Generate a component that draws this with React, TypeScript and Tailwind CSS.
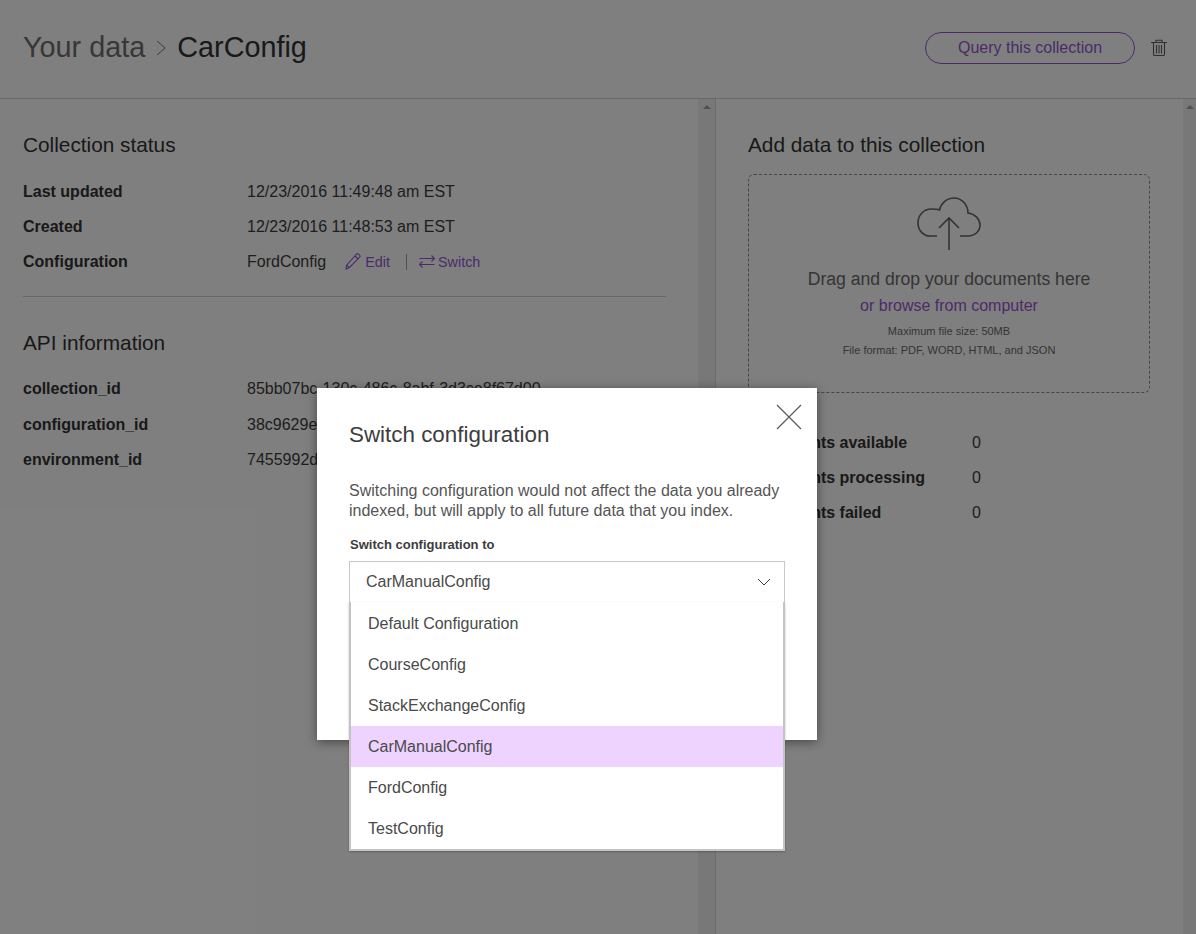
const options = [
  "Default Configuration",
  "CourseConfig",
  "StackExchangeConfig",
  "CarManualConfig",
  "FordConfig",
  "TestConfig",
];

function ScrollTrack({ className }: { className: string }) {
  return (
    <div className={`flex shrink-0 justify-center bg-[#f1f1f1] pt-[6px] ${className}`}>
      <div className="h-0 w-0 border-x-[4px] border-b-[4px] border-x-transparent border-b-[#a3a3a3]" />
    </div>
  );
}

function Row({ label, children }: { label: string; children: React.ReactNode }) {
  return (
    <div className="flex h-[35px] items-center text-base">
      <div className="w-[224px] shrink-0 font-bold text-[#323232]">{label}</div>
      <div className="flex items-center whitespace-nowrap text-[#3d3d3d]">{children}</div>
    </div>
  );
}

function PencilIcon() {
  return (
    <svg width="16" height="17" viewBox="0 0 16 17" fill="none" stroke="#9855d4" strokeWidth="1.1">
      <path d="M4.5 14.5 1 16l.6-3.8L11.5 1.2a1.5 1.5 0 0 1 2.1 0l1 .9a1.5 1.5 0 0 1 0 2.1z" />
      <path d="M1.6 12.2l2.9 2.3M10 3l3.2 3" />
    </svg>
  );
}

function SwitchIcon() {
  return (
    <svg width="16" height="13" viewBox="0 0 16 13" fill="none" stroke="#9855d4" strokeWidth="1.1">
      <path d="M0.5 3.5H15.5M12.5 0.5l3 3-3 3" />
      <path d="M15.5 9.5H0.5M3.5 6.5l-3 3 3 3" />
    </svg>
  );
}

function TrashIcon() {
  return (
    <svg width="16" height="17" viewBox="0 0 16 17" fill="none" stroke="#5e5e5e" strokeWidth="1.1">
      <path d="M0 3.5H16M5 3.5V1.2h6v2.3" />
      <path d="M2.5 3.5v11.8a1.2 1.2 0 0 0 1.2 1.2h8.6a1.2 1.2 0 0 0 1.2-1.2V3.5" />
      <path d="M5.5 6v8.5M8 6v8.5M10.5 6v8.5" />
    </svg>
  );
}

function CloudIcon() {
  return (
    <svg width="64" height="54" viewBox="0 0 64 54" fill="none" stroke="#666666" strokeWidth="1.6">
      <path d="M20 39H13C6 39 1 33 1 26C1 18 7 12 14 12C17 12 20 12 22.5 13C24 6 30 1 37 1C45 1 51 8 51 16C58 17 63 22 63 28C63 34 58 39 51 39H43" />
      <path d="M32 53V21.5M22 31l10-10 10 10" />
    </svg>
  );
}

function CloseIcon() {
  return (
    <svg width="26" height="26" viewBox="0 0 26 26" fill="none" stroke="#5a5a5a" strokeWidth="1.2">
      <path d="M1 1l24 24M25 1L1 25" />
    </svg>
  );
}

function ChevronIcon() {
  return (
    <svg width="14" height="8" viewBox="0 0 14 8" fill="none" stroke="#3d3d3d" strokeWidth="1">
      <path d="M1 1l6 6 6-6" />
    </svg>
  );
}

export default function App() {
  return (
    <div className="relative flex h-[934px] w-[1196px] flex-col overflow-hidden bg-white font-['Liberation_Sans',Arial,sans-serif]">
      <header className="flex h-[99px] shrink-0 items-center justify-between border-b border-[#d0d0d0] pb-[3px] pl-[23px] pr-[29px]">
        <div className="flex items-center text-[28.8px]">
          <span className="text-[#6f6f6f]">Your data</span>
          <svg className="mx-[10px]" width="12" height="16" viewBox="0 0 12 16" fill="none" stroke="#777777" strokeWidth="1">
            <path d="M2 1l8 7-8 7" />
          </svg>
          <span className="text-[#323232]">CarConfig</span>
        </div>
        <div className="flex items-center gap-[16px]">
          <button className="h-[32px] w-[210px] rounded-full border border-[#9855d4] text-base text-[#9855d4]">
            Query this collection
          </button>
          <TrashIcon />
        </div>
      </header>

      <main className="flex min-h-0 flex-1">
        <section className="w-[698px] shrink-0 px-[23px] pt-[34px]">
          <h2 className="mb-[17px] h-[24px] text-[20.8px] leading-[24px] text-[#323232]">Collection status</h2>
          <Row label="Last updated">12/23/2016 11:49:48 am EST</Row>
          <Row label="Created">12/23/2016 11:48:53 am EST</Row>
          <Row label="Configuration">
            <span>FordConfig</span>
            <span className="ml-[19px] flex items-center gap-[4px] text-[14.4px] text-[#9855d4]">
              <PencilIcon />
              <span className="pt-[2px]">Edit</span>
            </span>
            <span className="ml-[16px] mr-[12px] h-[16px] w-px bg-[#a0a0a0]" />
            <span className="flex items-center gap-[3px] text-[14.4px] text-[#9855d4]">
              <SwitchIcon />
              <span className="pt-[2px]">Switch</span>
            </span>
          </Row>
          <div className="mb-[34px] mr-[9px] mt-[17px] h-px bg-[#d0d0d0]" />
          <h2 className="mb-[16.5px] h-[24px] text-[20.8px] leading-[24px] text-[#323232]">API information</h2>
          <div className="mb-px">
            <Row label="collection_id">85bb07bc-130c-486c-8abf-3d3ce8f67d00</Row>
          </div>
          <Row label="configuration_id">38c9629e-4f2a-4c1b-9d07-6e21b7c4a915</Row>
          <Row label="environment_id">7455992d-2b41-4e6f-a3c8-01fd7e9b5a26</Row>
        </section>

        <ScrollTrack className="w-[17px]" />
        <div className="w-px shrink-0 bg-[#d8d8d8]" />

        <section className="w-[467px] shrink-0 pl-[32px] pr-[33px] pt-[34px]">
          <h2 className="mb-[17px] h-[24px] text-[20.8px] leading-[24px] text-[#323232]">Add data to this collection</h2>
          <div className="flex h-[219px] flex-col items-center rounded-[6px] border border-dashed border-[#8c8c8c] pt-[22px]">
            <CloudIcon />
            <p className="mt-[16px] text-[17.6px] leading-[24px] text-[#6a6a6a]">Drag and drop your documents here</p>
            <p className="mt-[3px] text-base leading-[24px] text-[#9855d4]">or browse from computer</p>
            <p className="mt-[4px] text-[11px] leading-[19px] text-[#6a6a6a]">Maximum file size: 50MB</p>
            <p className="text-[11px] leading-[19px] text-[#6a6a6a]">File format: PDF, WORD, HTML, and JSON</p>
          </div>
          <div className="mt-[32px]">
            <Row label="Documents available">0</Row>
            <Row label="Documents processing">0</Row>
            <Row label="Documents failed">0</Row>
          </div>
        </section>

        <ScrollTrack className="w-[13px]" />
      </main>

      <div className="absolute inset-0 bg-black/50" />

      <div className="absolute left-[317px] top-[388px] h-[352px] w-[500px] bg-white px-[32px] pt-[34px] shadow-[0_2px_10px_rgba(0,0,0,0.45)]">
        <button className="absolute right-[15px] top-[16px]">
          <CloseIcon />
        </button>
        <h3 className="h-[26px] text-[22.4px] leading-[26px] text-[#3d3d3d]">Switch configuration</h3>
        <p className="mt-[33px] w-[436px] text-base leading-[20px] text-[#555555]">
          Switching configuration would not affect the data you already indexed, but will apply to all future data that you index.
        </p>
        <label className="mt-[14px] block pl-px text-[13px] font-bold leading-[20px] text-[#3d3d3d]">
          Switch configuration to
        </label>
        <div className="mt-[6px] flex h-[42px] w-[436px] items-center justify-between border border-[#c8c8c8] pl-[16px] pr-[13px] text-base text-[#4a4a4a]">
          CarManualConfig
          <ChevronIcon />
        </div>
        <ul className="absolute left-[32px] top-[214px] w-[436px] border-x-2 border-b-2 border-[#c4c4c4] bg-white pt-px shadow-[0_1px_2px_rgba(0,0,0,0.25)]">
          {options.map((option) => (
            <li
              key={option}
              className={`flex h-[41px] items-center pl-[17px] text-base text-[#4a4a4a] ${
                option === "CarManualConfig" ? "bg-[#eed2ff]" : ""
              }`}
            >
              {option}
            </li>
          ))}
        </ul>
      </div>
    </div>
  );
}
